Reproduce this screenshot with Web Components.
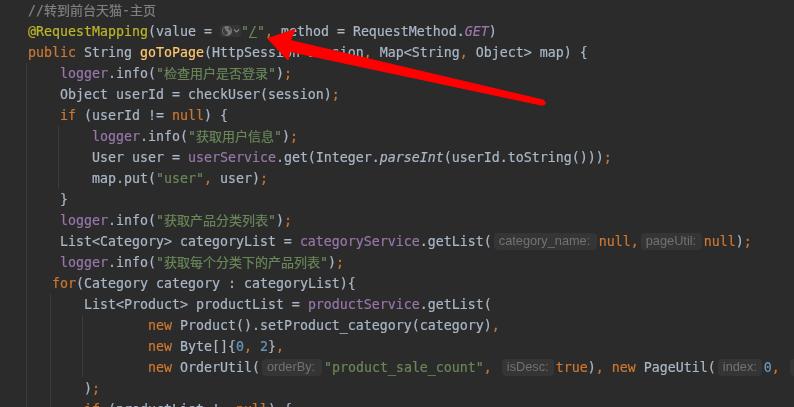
<!DOCTYPE html>
<html>
<head>
<meta charset="utf-8">
<style>
html, body { margin: 0; background: #2b2b2b; overflow: hidden; }
</style>
</head>
<body>
<code-editor>
  <code-line><c-t k="com">//<c-t k="cjk">转到前台天猫</c-t>-<c-t k="cjk">主页</c-t></c-t></code-line>
  <code-line><c-t k="ann">@RequestMapping</c-t>(value = <link-pill></link-pill><c-t k="str">"<c-t k="url">/</c-t>"</c-t><c-t k="kw">,</c-t> method = RequestMethod.<c-t k="fi">GET</c-t>)</code-line>
  <code-line><c-t k="kw">public</c-t> String <c-t k="fn">goToPage</c-t>(HttpSession session<c-t k="kw">,</c-t> Map&lt;String<c-t k="kw">,</c-t> Object&gt; map) {</code-line>
  <code-line>    <c-t k="f">logger</c-t>.info(<c-t k="str">"<c-t k="cjk">检查用户是否登录</c-t>"</c-t>)<c-t k="kw">;</c-t></code-line>
  <code-line>    Object userId = checkUser(session)<c-t k="kw">;</c-t></code-line>
  <code-line>    <c-t k="kw">if</c-t> (userId != <c-t k="kw">null</c-t>) {</code-line>
  <code-line>        <c-t k="f">logger</c-t>.info(<c-t k="str">"<c-t k="cjk">获取用户信息</c-t>"</c-t>)<c-t k="kw">;</c-t></code-line>
  <code-line>        User user = <c-t k="f">userService</c-t>.get(Integer.<c-t k="i">parseInt</c-t>(userId.toString()))<c-t k="kw">;</c-t></code-line>
  <code-line>        map.put(<c-t k="str">"user"</c-t><c-t k="kw">,</c-t> user)<c-t k="kw">;</c-t></code-line>
  <code-line>    }</code-line>
  <code-line>    <c-t k="f">logger</c-t>.info(<c-t k="str">"<c-t k="cjk">获取产品分类列表</c-t>"</c-t>)<c-t k="kw">;</c-t></code-line>
  <code-line>    List&lt;Category&gt; categoryList = <c-t k="f">categoryService</c-t>.getList(<inlay-hint w="103">category_name:</inlay-hint><c-t k="kw">null,</c-t><inlay-hint w="61">pageUtil:</inlay-hint><c-t k="kw">null</c-t>)<c-t k="kw">;</c-t></code-line>
  <code-line>    <c-t k="f">logger</c-t>.info(<c-t k="str">"<c-t k="cjk">获取每个分类下的产品列表</c-t>"</c-t>)<c-t k="kw">;</c-t></code-line>
  <code-line>   <c-t k="kw">for</c-t>(Category category : categoryList){</code-line>
  <code-line>       List&lt;Product&gt; productList = <c-t k="f">productService</c-t>.getList(</code-line>
  <code-line>               <c-t k="kw">new</c-t> Product().setProduct_category(category)<c-t k="kw">,</c-t></code-line>
  <code-line>               <c-t k="kw">new</c-t> Byte[]{<c-t k="num">0</c-t><c-t k="kw">,</c-t> <c-t k="num">2</c-t>}<c-t k="kw">,</c-t></code-line>
  <code-line>               <c-t k="kw">new</c-t> OrderUtil(<inlay-hint w="60">orderBy:</inlay-hint><c-t k="str">"product_sale_count"</c-t><c-t k="kw">,</c-t> <inlay-hint w="52">isDesc:</inlay-hint><c-t k="kw">true</c-t>)<c-t k="kw">,</c-t> <c-t k="kw">new</c-t> PageUtil(<inlay-hint w="44">index:</inlay-hint><c-t k="num">0</c-t><c-t k="kw">,</c-t> <inlay-hint w="40"></inlay-hint></code-line>
  <code-line>       )<c-t k="kw">;</c-t></code-line>
  <code-line>       <c-t k="kw">if</c-t> (productList != <c-t k="kw">null</c-t>) {</code-line>
</code-editor>

<script>
// Editor surface: indent guides behind the code, red annotation arrow on top
const editor_template = document.createElement('template');
editor_template.innerHTML = `<style>
:host{
  display: block;
  position: relative;
  height: 407px;
  overflow: hidden;
  background: #2b2b2b;
  color: #a9b7c6;
  font: 13.29px/21px "DejaVu Sans Mono", "Noto Sans CJK SC", monospace;
  -webkit-text-stroke: 0.2px;
}
#code{
  display: flex;
  flex-direction: column;
  padding-left: 28px;
  filter: blur(0.3px);
}
svg{
  position: absolute;
  left: 0;
  top: 0;
}
</style><svg id="guides" width="794" height="407" fill="none" stroke="#3b3b3b">
  <path d="M26.5 63V407M58.5 126V189M50.5 294V407M82.5 315V377"/>
</svg><div id="code"><slot></slot></div><svg id="arrow" width="794" height="407">
  <path fill="#ff0000" stroke="#ff0000" stroke-linejoin="round" d="M267.5 38.5L295 29.5L290.5 40.5L543 100Q546.5 102 545 104Q544 105.5 541 105L290 51.5L288 60Z"/>
</svg>`;

class CodeEditor extends HTMLElement{
  constructor(){
    super();
    this.attachShadow({mode:"open"});
    this.shadowRoot.appendChild(editor_template.content.cloneNode(true));
  }
}

// One row of code, spaces are kept so indents stay on the character grid.
// Templates below hold no stray whitespace, it would show up under white-space: pre
const line_template = document.createElement('template');
line_template.innerHTML = `<style>
:host{
  display: block;
  height: 21px;
  white-space: pre;
}
</style><slot></slot>`;

class CodeLine extends HTMLElement{
  constructor(){
    super();
    this.attachShadow({mode:"open"});
    this.shadowRoot.appendChild(line_template.content.cloneNode(true));
  }
}

// Syntax colored token
const token_template = document.createElement('template');
token_template.innerHTML = `<style>
:host{ display: inline; }
:host([k="kw"]){ color: #cc7832; }
:host([k="str"]){ color: #6a8759; }
:host([k="com"]){ color: #808080; }
:host([k="ann"]){ color: #bbb529; }
:host([k="f"]){ color: #9876aa; }
:host([k="fi"]){ color: #9876aa; font-style: italic; }
:host([k="fn"]){ color: #ffc66d; }
:host([k="num"]){ color: #6897bb; }
:host([k="i"]){ font-style: italic; }
:host([k="url"]){ text-decoration: underline; font-style: italic; }
:host([k="cjk"]){ font-size: 13px; line-height: 0; font-family: "Noto Sans CJK SC", sans-serif; }
</style><slot></slot>`;

class CodeToken extends HTMLElement{
  constructor(){
    super();
    this.attachShadow({mode:"open"});
    this.shadowRoot.appendChild(token_template.content.cloneNode(true));
  }
}

// Parameter name hint drawn by the IDE, width comes from the w attribute
const hint_template = document.createElement('template');
hint_template.innerHTML = `<style>
:host{
  display: inline-block;
  box-sizing: border-box;
  height: 17px;
  margin: 0 2px;
  padding-left: 5px;
  vertical-align: -4px;
  border-radius: 4px;
  background: #353535;
  color: #727272;
  font: 12.75px/16px "Liberation Sans", Arial, sans-serif;
  -webkit-text-stroke: 0;
  overflow: hidden;
}
</style><slot></slot>`;

class InlayHint extends HTMLElement{
  constructor(){
    super();
    this.attachShadow({mode:"open"});
    this.shadowRoot.appendChild(hint_template.content.cloneNode(true));
  }
  connectedCallback(){
    this.style.width = this.getAttribute("w") + "px";
  }
}

// Globe + chevron pill in front of the url mapping
const pill_template = document.createElement('template');
pill_template.innerHTML = `<style>
:host{
  display: inline-block;
  width: 21px;
  height: 12px;
  vertical-align: -1px;
  border-radius: 3px;
  background: #353535;
}
svg{ display: block; }
</style><svg width="21" height="12" viewBox="0 0 21 12" fill="none">
  <circle cx="7" cy="6" r="5" fill="#787878"/>
  <path d="M4 2.5Q6 4 5.5 5.5Q7.5 6 8 8Q6.5 9.5 6 10.5Q3 9 2.5 6Q3 4 4 2.5Z" fill="#3c3c3c"/>
  <path d="M9.5 2.5Q11 4 10.5 6Q9 5 8 3Q8.5 2 9.5 2.5Z" fill="#3c3c3c"/>
  <path d="M14 4.5L16.5 7L19 4.5" stroke="#858585" stroke-width="1.2"/>
</svg>`;

class LinkPill extends HTMLElement{
  constructor(){
    super();
    this.attachShadow({mode:"open"});
    this.shadowRoot.appendChild(pill_template.content.cloneNode(true));
  }
}

customElements.define("code-editor", CodeEditor);
customElements.define("code-line", CodeLine);
customElements.define("c-t", CodeToken);
customElements.define("inlay-hint", InlayHint);
customElements.define("link-pill", LinkPill);
</script>
</body>
</html>
